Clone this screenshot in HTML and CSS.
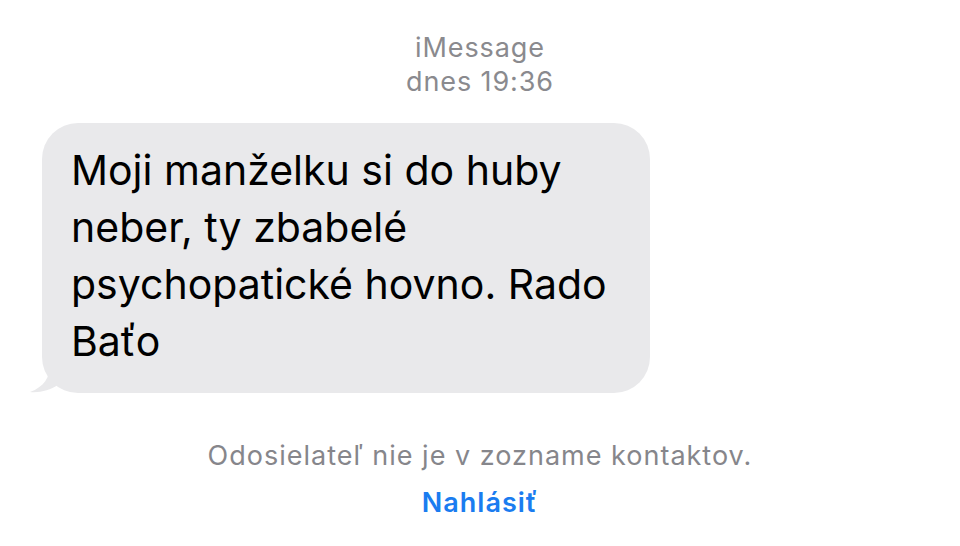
FILE: index.html
```html
<!DOCTYPE html>
<html lang="sk">
<head>
    <meta charset="UTF-8">
    <meta name="viewport" content="width=device-width, initial-scale=1.0">
    <title>iMessage</title>
    <link rel="stylesheet" href="styles.css">
</head>
<body>
    <div class="chat">
        <div class="meta">
            <span>iMessage</span>
            <span>dnes 19:36</span>
        </div>

        <div class="row">
            <div class="bubble">
                <p>Moji manželku si do huby<br>neber, ty zbabelé<br>psychopatické hovno. Rado<br>Baťo</p>
                <svg class="tail" width="30" height="28" viewBox="0 0 30 28">
                    <path d="M22 0 C22 12 16 22 2 27 C12 28 22 25 30 20 L30 0 Z" fill="#e9e9eb"/>
                </svg>
            </div>
        </div>

        <div class="notice">
            <span>Odosielateľ nie je v zozname kontaktov.</span>
            <a href="#" class="report">Nahlásiť</a>
        </div>
    </div>
</body>
</html>
```

FILE: styles.css
```css
body
{
    margin: 0;
    background: #fff;
    font-family: Inter, "Noto Sans", sans-serif;
}
.chat
{
    width: 960px;
    height: 546px;
    display: flex;
    flex-direction: column;
}
.meta
{
    display: flex;
    flex-direction: column;
    align-items: center;
    padding-top: 31px;
    color: #8a8a8e;
    font-size: 27px;
    line-height: 34px;
    letter-spacing: 0.9px;
}
.row
{
    padding: 24px 0 0 42px;
    display: flex;
}
.bubble
{
    position: relative;
    background: #e9e9eb;
    border-radius: 36px;
    width: 608px;
    height: 270px;
    box-sizing: border-box;
    padding: 19px 20px 0 29px;
}
.bubble p
{
    margin: 0;
    font-size: 41px;
    line-height: 57px;
    color: #000;
}
.tail
{
    position: absolute;
    left: -14px;
    bottom: 0;
}
.notice
{
    display: flex;
    flex-direction: column;
    align-items: center;
    padding-top: 46px;
    gap: 13px;
    font-size: 27px;
    line-height: 34px;
    letter-spacing: 1px;
    color: #86868b;
}
.report
{
    color: #1a7cf0;
    font-weight: 600;
    text-decoration: none;
}
```
